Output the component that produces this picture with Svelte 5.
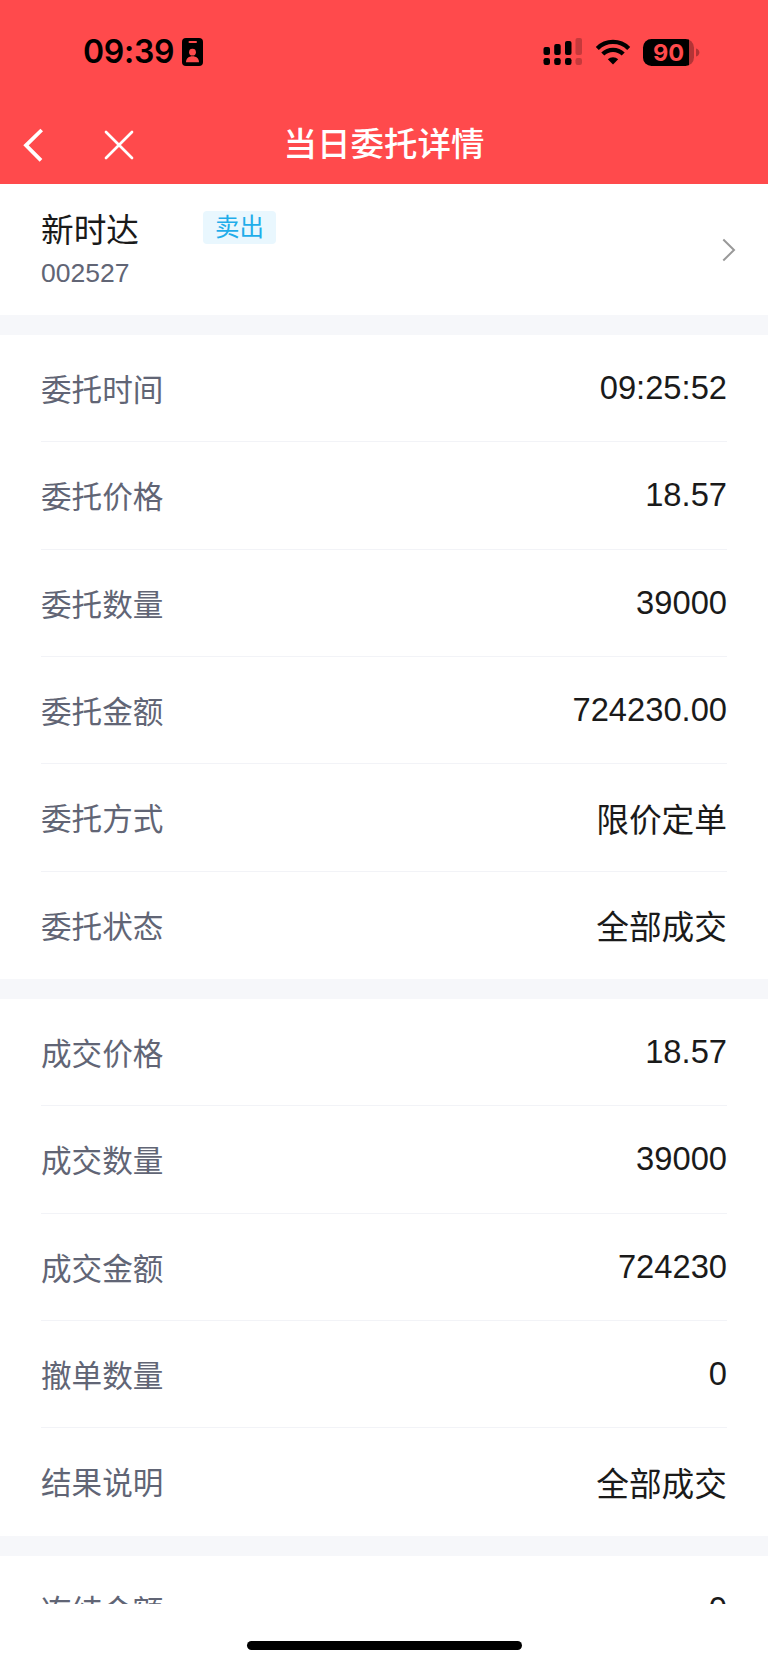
<script>
  // Stock shown at the top of the page
  const stock = { name: "新时达", code: "002527", side: "卖出" };

  // Order details, one group per block
  const groups = [
    [
      { label: "委托时间", value: "09:25:52" },
      { label: "委托价格", value: "18.57" },
      { label: "委托数量", value: "39000" },
      { label: "委托金额", value: "724230.00" },
      { label: "委托方式", value: "限价定单" },
      { label: "委托状态", value: "全部成交" },
    ],
    [
      { label: "成交价格", value: "18.57" },
      { label: "成交数量", value: "39000" },
      { label: "成交金额", value: "724230" },
      { label: "撤单数量", value: "0" },
      { label: "结果说明", value: "全部成交" },
    ],
    [{ label: "冻结金额", value: "0" }],
  ];
</script>

<div class="page">
  <header>
    <div class="status-bar">
      <div class="clock">
        <span class="time">09:39</span>
        <svg class="id-card" width="21" height="28" viewBox="0 0 21 28">
          <rect width="21" height="28" rx="4" fill="#000" />
          <rect x="6.5" y="3" width="8.5" height="2" rx="1" fill="#ff4a4c" />
          <circle cx="10.5" cy="14.2" r="3.4" fill="#ff4a4c" />
          <path d="M4 24.2c0-4 3-6 6.5-6s6.500 2 6.500 6z" fill="#ff4a4c" />
        </svg>
      </div>
      <div class="indicators">
        <svg width="40" height="28" viewBox="0 0 40 28">
          <rect x="0.500" y="9" width="6.500" height="8" rx="2" />
          <rect x="11.200" y="6" width="6.500" height="11" rx="2" />
          <rect x="22" y="3" width="6.500" height="14" rx="2" />
          <rect x="0.500" y="20" width="6.500" height="7" rx="2.200" />
          <rect x="11.200" y="20" width="6.500" height="7" rx="2.200" />
          <rect x="22" y="20" width="6.500" height="7" rx="2.200" />
          <g opacity="0.22">
            <rect x="32.500" y="0" width="6.500" height="17" rx="2" />
            <rect x="32.500" y="20" width="6.500" height="7" rx="2.200" />
          </g>
        </svg>
        <svg class="wifi" width="36" height="26" viewBox="0 0 36 26">
          <g fill="none" stroke="#000" stroke-width="4.300">
            <path d="M2.300 9.400a22.200 22.200 0 0 1 31.400 0" />
            <path d="M7.800 15.100a14.400 14.400 0 0 1 20.400 0" />
          </g>
          <path d="M18 25.500l-5.200-5.200a7.400 7.400 0 0 1 10.400 0z" />
        </svg>
        <div class="battery">
          <div class="level">90</div>
          <svg width="4" height="9" viewBox="0 0 4 9">
            <path d="M0 0.500c4.500 1 4.500 7 0 8z" opacity="0.3" />
          </svg>
        </div>
      </div>
    </div>
    <div class="nav-bar">
      <div class="nav-buttons">
        <svg width="22" height="36" viewBox="0 0 22 36">
          <path d="M19.700 3L4 18.300l15 15" fill="none" stroke="#fff" stroke-width="3.800" />
        </svg>
        <svg width="30" height="30" viewBox="0 0 30 30">
          <path
            d="M2 2l26 26M28 2L2 28"
            fill="none"
            stroke="#fff"
            stroke-width="2.700"
            stroke-linecap="round"
          />
        </svg>
      </div>
      <h1>当日委托详情</h1>
    </div>
  </header>

  <main>
    <section class="stock">
      <div>
        <div class="stock-title">
          <span class="name">{stock.name}</span>
          <span class="tag">{stock.side}</span>
        </div>
        <div class="code">{stock.code}</div>
      </div>
      <svg width="14" height="24" viewBox="0 0 14 24">
        <path d="M1.300 1.500L12 12 1.300 22.500" fill="none" stroke="#999" stroke-width="2" />
      </svg>
    </section>

    {#each groups as rows}
      <section class="group">
        {#each rows as row}
          <div class="row">
            <span class="label">{row.label}</span>
            <span class="value">{row.value}</span>
          </div>
        {/each}
      </section>
    {/each}
  </main>

  <!-- Home indicator -->
  <footer><div class="home-bar"></div></footer>
</div>

<style>
  :global(body) {
    margin: 0;
    background: #fff;
  }

  .page {
    display: flex;
    flex-direction: column;
    height: 1665px;
    overflow: hidden;
    font-family: "Liberation Sans", "Noto Sans CJK SC", sans-serif;
    color: #1a1a1a;
  }

  svg {
    display: block;
    flex: none;
  }

  header {
    flex: none;
    height: 184px;
    background: #ff4a4c;
  }

  .status-bar {
    display: flex;
    justify-content: space-between;
    align-items: center;
    height: 104px;
    padding: 0 68px 0 83px;
    color: #000;
  }

  .clock {
    display: flex;
    align-items: center;
    gap: 9px;
  }

  .time {
    width: 90px;
    font: 600 32px/40px Inter, sans-serif;
    letter-spacing: -0.3px;
  }

  .indicators {
    display: flex;
    align-items: center;
  }

  .wifi {
    margin: 0 12px 0 12px;
  }

  .battery {
    display: flex;
    align-items: center;
    gap: 2px;
  }

  .level {
    width: 51px;
    height: 27px;
    border-radius: 8.5px;
    background: linear-gradient(to right, #000 46px, #b33436 46px);
    color: #ff4a4c;
    font: 700 23.500px/27px Inter, sans-serif;
    text-align: center;
  }

  .nav-bar {
    display: grid;
    grid-template-columns: 1fr auto 1fr;
    align-items: center;
    height: 80px;
  }

  .nav-buttons {
    display: flex;
    align-items: center;
    gap: 60px;
    padding: 1px 0 0 22px;
    box-sizing: border-box;
    height: 80px;
  }

  h1 {
    margin: 0;
    padding-top: 1px;
    color: #fff;
    font-size: 33.500px;
    font-weight: 500;
    line-height: 48px;
  }

  main {
    flex: none;
    height: 1420px;
    overflow: hidden;
  }

  .stock {
    display: flex;
    justify-content: space-between;
    align-items: center;
    box-sizing: border-box;
    height: 131px;
    padding: 0 32px 0 41px;
  }

  .stock-title {
    display: flex;
    align-items: center;
    gap: 64px;
    height: 46px;
  }

  .name {
    font-size: 32.700px;
  }

  .tag {
    width: 73px;
    height: 33px;
    border-radius: 4px;
    background: #e9f7fe;
    color: #1fadea;
    font-size: 24.500px;
    line-height: 33px;
    text-align: center;
  }

  .code {
    height: 44px;
    color: #616575;
    font-size: 26.500px;
    line-height: 44px;
  }

  .group {
    border-top: 20.500px solid #f6f7fa;
  }

  .row {
    display: flex;
    justify-content: space-between;
    align-items: center;
    box-sizing: border-box;
    height: 107.330px;
    margin: 0 41px;
    border-bottom: 1px solid #f2f3f7;
  }

  .row:last-child {
    border-bottom-color: transparent;
  }

  .label {
    color: #616575;
    font-size: 30.600px;
  }

  .value {
    font-size: 32.700px;
  }

  footer {
    flex: 1;
    display: flex;
    justify-content: center;
    padding-top: 37px;
  }

  .home-bar {
    width: 275px;
    height: 9px;
    border-radius: 5px;
    background: #000;
  }
</style>
